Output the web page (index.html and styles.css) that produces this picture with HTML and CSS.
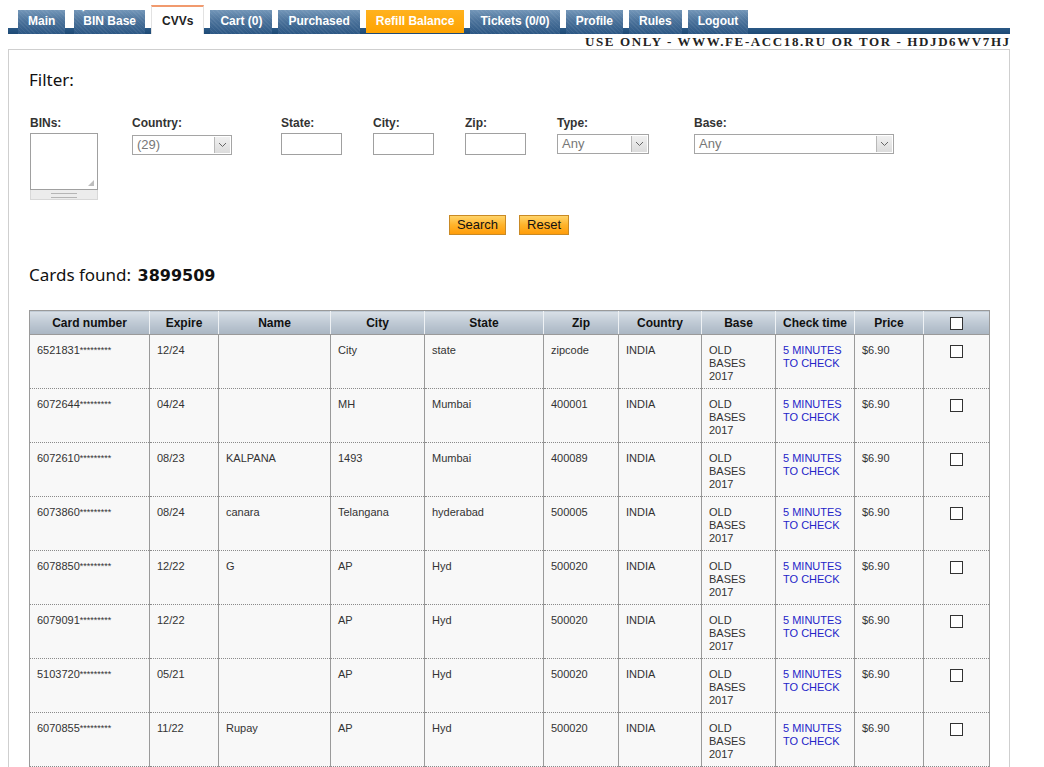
FILE: index.html
```html
<!DOCTYPE html>
<html>
<head>
<meta charset="utf-8">
<title>CVVs</title>
<link rel="stylesheet" href="styles.css">
</head>
<body>
<div class="page">
  <nav class="tabs">
    <a class="tab">Main</a>
    <a class="tab tab-bin"><span class="dot">˙</span>BIN Base</a>
    <a class="tab active">CVVs</a>
    <a class="tab">Cart (0)</a>
    <a class="tab">Purchased</a>
    <a class="tab refill">Refill Balance</a>
    <a class="tab">Tickets (0/0)</a>
    <a class="tab">Profile</a>
    <a class="tab">Rules</a>
    <a class="tab">Logout</a>
  </nav>
  <div class="note">USE ONLY - WWW.FE-ACC18.RU OR TOR - HDJD6WV7HJ</div>
  <main class="box">
    <h2 class="filter-title">Filter:</h2>
    <div class="fields">
      <div class="field f-bins">
        <label>BINs:</label>
        <div class="ta-wrap">
          <div class="ta"><span class="grip"></span></div>
          <div class="ta-bar"></div>
        </div>
      </div>
      <div class="field f-country">
        <label>Country:</label>
        <div class="sel sel-country"><span class="sel-val">(29)</span><span class="sel-btn"><svg width="9" height="6" viewBox="0 0 9 6"><polyline points="1,1 4.5,4.5 8,1" fill="none" stroke="#666" stroke-width="1"/></svg></span></div>
      </div>
      <div class="field f-text">
        <label>State:</label>
        <div class="inp"></div>
      </div>
      <div class="field f-text">
        <label>City:</label>
        <div class="inp"></div>
      </div>
      <div class="field f-text">
        <label>Zip:</label>
        <div class="inp"></div>
      </div>
      <div class="field f-type">
        <label>Type:</label>
        <div class="sel sel-type"><span class="sel-val">Any</span><span class="sel-btn"><svg width="9" height="6" viewBox="0 0 9 6"><polyline points="1,1 4.5,4.5 8,1" fill="none" stroke="#666" stroke-width="1"/></svg></span></div>
      </div>
      <div class="field f-base">
        <label>Base:</label>
        <div class="sel sel-base"><span class="sel-val">Any</span><span class="sel-btn"><svg width="9" height="6" viewBox="0 0 9 6"><polyline points="1,1 4.5,4.5 8,1" fill="none" stroke="#666" stroke-width="1"/></svg></span></div>
      </div>
    </div>
    <div class="buttons">
      <button class="btn">Search</button>
      <button class="btn">Reset</button>
    </div>
    <div class="found">Cards found: <b>3899509</b></div>
    <table class="cards">
      <colgroup>
        <col class="c-card"><col class="c-exp"><col class="c-name"><col class="c-city"><col class="c-state"><col class="c-zip"><col class="c-country"><col class="c-base"><col class="c-check"><col class="c-price"><col class="c-box">
      </colgroup>
      <thead>
        <tr><th>Card number</th><th>Expire</th><th>Name</th><th>City</th><th>State</th><th>Zip</th><th>Country</th><th>Base</th><th>Check time</th><th>Price</th><th><span class="cb"></span></th></tr>
      </thead>
      <tbody>
        <tr><td>6521831<span class="ast">*********</span></td><td>12/24</td><td></td><td>City</td><td>state</td><td>zipcode</td><td>INDIA</td><td>OLD<br>BASES<br>2017</td><td><a class="chk">5 MINUTES<br>TO CHECK</a></td><td>$6.90</td><td class="boxcell"><span class="cb"></span></td></tr>
        <tr><td>6072644<span class="ast">*********</span></td><td>04/24</td><td></td><td>MH</td><td>Mumbai</td><td>400001</td><td>INDIA</td><td>OLD<br>BASES<br>2017</td><td><a class="chk">5 MINUTES<br>TO CHECK</a></td><td>$6.90</td><td class="boxcell"><span class="cb"></span></td></tr>
        <tr><td>6072610<span class="ast">*********</span></td><td>08/23</td><td>KALPANA</td><td>1493</td><td>Mumbai</td><td>400089</td><td>INDIA</td><td>OLD<br>BASES<br>2017</td><td><a class="chk">5 MINUTES<br>TO CHECK</a></td><td>$6.90</td><td class="boxcell"><span class="cb"></span></td></tr>
        <tr><td>6073860<span class="ast">*********</span></td><td>08/24</td><td>canara</td><td>Telangana</td><td>hyderabad</td><td>500005</td><td>INDIA</td><td>OLD<br>BASES<br>2017</td><td><a class="chk">5 MINUTES<br>TO CHECK</a></td><td>$6.90</td><td class="boxcell"><span class="cb"></span></td></tr>
        <tr><td>6078850<span class="ast">*********</span></td><td>12/22</td><td>G</td><td>AP</td><td>Hyd</td><td>500020</td><td>INDIA</td><td>OLD<br>BASES<br>2017</td><td><a class="chk">5 MINUTES<br>TO CHECK</a></td><td>$6.90</td><td class="boxcell"><span class="cb"></span></td></tr>
        <tr><td>6079091<span class="ast">*********</span></td><td>12/22</td><td></td><td>AP</td><td>Hyd</td><td>500020</td><td>INDIA</td><td>OLD<br>BASES<br>2017</td><td><a class="chk">5 MINUTES<br>TO CHECK</a></td><td>$6.90</td><td class="boxcell"><span class="cb"></span></td></tr>
        <tr><td>5103720<span class="ast">*********</span></td><td>05/21</td><td></td><td>AP</td><td>Hyd</td><td>500020</td><td>INDIA</td><td>OLD<br>BASES<br>2017</td><td><a class="chk">5 MINUTES<br>TO CHECK</a></td><td>$6.90</td><td class="boxcell"><span class="cb"></span></td></tr>
        <tr><td>6070855<span class="ast">*********</span></td><td>11/22</td><td>Rupay</td><td>AP</td><td>Hyd</td><td>500020</td><td>INDIA</td><td>OLD<br>BASES<br>2017</td><td><a class="chk">5 MINUTES<br>TO CHECK</a></td><td>$6.90</td><td class="boxcell"><span class="cb"></span></td></tr>
      </tbody>
    </table>
  </main>
</div>
</body>
</html>
```
FILE: styles.css
```css
html, body {
  background: #fff;
}
body {
  margin: 5px 8px 0;
  font-family: "Liberation Sans", Arial, sans-serif;
  color: #333;
}
.page {
  width: 1002px;
}

/* tabs */
.tabs {
  display: flex;
  align-items: flex-end;
  gap: 6px;
  padding-left: 10px;
  height: 29px;
  background: linear-gradient(to top, #1e4a75 0, #2a5885 6px, transparent 6px);
}
.tab {
  display: block;
  height: 24px;
  box-sizing: border-box;
  padding: 3px 10px 5px;
  line-height: 16px;
  font-size: 12px;
  font-weight: bold;
  color: #fff;
  background:
    repeating-linear-gradient(45deg, rgba(255,255,255,0.06) 0 1px, transparent 1px 3px),
    linear-gradient(to bottom, #7396b8 0%, #4c739b 45%, #2c5784 100%);
  white-space: nowrap;
  position: relative;
}
.tab-bin {
  margin-left: 3px;
  padding-left: 9px;
  padding-right: 9px;
}
.tab .dot {
  position: absolute;
  left: 7px;
  top: -3px;
  font-size: 12px;
}
.tab.active {
  height: 29px;
  padding-top: 6px;
  background: #fff;
  color: #222;
  border-top: 2px solid #f19a6e;
  border-left: 1px solid #e2e2e2;
  border-right: 1px solid #e2e2e2;
  padding-left: 10px;
  padding-right: 10px;
}
.tab.refill {
  height: 23px;
  margin-bottom: 1px;
  background: linear-gradient(to bottom, #ffb21f, #ffa300);
  color: #fff;
}

.note {
  height: 15px;
  line-height: 15px;
  padding-left: 577px;
  overflow: hidden;
  white-space: nowrap;
  font-family: "Liberation Serif", "Times New Roman", serif;
  font-weight: bold;
  font-size: 13px;
  letter-spacing: 1.6px;
  color: #222;
}

/* content box */
.box {
  border: 1px solid #cfcfcf;
  border-bottom: none;
  padding: 20px 20px 0;
  min-height: 700px;
}
.filter-title {
  margin: 0;
  font-family: "Noto Sans", "DejaVu Sans", sans-serif;
  font-weight: normal;
  font-size: 17px;
  line-height: 20px;
  color: #111;
}

.fields {
  display: flex;
  align-items: flex-start;
  margin-top: 26px;
  padding-left: 1px;
}
.field label {
  display: block;
  font-size: 12px;
  font-weight: bold;
  line-height: 15px;
  margin-bottom: 2px;
  color: #333;
}
.f-bins { width: 102px; }
.f-country { width: 149px; }
.f-text { width: 92px; }
.f-type { width: 137px; }
.f-base { width: 210px; }

.ta-wrap {
  width: 68px;
}
.ta {
  height: 55px;
  border: 1px solid #a0a0a0;
  background: #fff;
  position: relative;
}
.grip {
  position: absolute;
  right: 3px;
  bottom: 3px;
  width: 6px;
  height: 6px;
  background:
    radial-gradient(circle, #999 0.6px, transparent 0.9px) 0 0 / 2px 2px;
  clip-path: polygon(100% 0, 100% 100%, 0 100%);
}
.ta-bar {
  height: 9px;
  background: #ececec;
  border: 1px solid #d8d8d8;
  border-top: none;
  position: relative;
}
.ta-bar::before {
  content: "";
  position: absolute;
  left: 20px;
  right: 20px;
  top: 3px;
  height: 3px;
  border-top: 1px solid #b5b5b5;
  border-bottom: 1px solid #b5b5b5;
}

.inp {
  margin-top: 2px;
  width: 61px;
  height: 22px;
  box-sizing: border-box;
  border: 1px solid #a0a0a0;
  background: #fff;
}
.sel {
  display: flex;
  margin-top: 3px;
  height: 20px;
  box-sizing: border-box;
  border: 1px solid #a5a5a5;
  background: #fff;
}
.sel-country { width: 100px; margin-top: 4px; }
.sel-type { width: 92px; }
.sel-base { width: 200px; }
.sel-val {
  flex: 1;
  padding-left: 4px;
  font-size: 13px;
  line-height: 18px;
  color: #777;
}
.sel-btn {
  width: 15px;
  display: flex;
  align-items: center;
  justify-content: center;
  background: linear-gradient(#f0f0f0, #dcdcdc);
  border-left: 1px solid #b8b8b8;
  margin: 1px;
}

.buttons {
  display: flex;
  justify-content: center;
  gap: 13px;
  margin-top: 15px;
}
.btn {
  height: 20px;
  padding: 0 7px;
  font-family: "Liberation Sans", Arial, sans-serif;
  font-size: 13px;
  line-height: 18px;
  color: #111;
  background: linear-gradient(to bottom, #ffd46a 0%, #ffb32a 50%, #ff9d0a 100%);
  border: 1px solid #c98a25;
  border-radius: 0;
}

.found {
  margin-top: 29px;
  font-family: "Noto Sans", "DejaVu Sans", sans-serif;
  font-size: 17px;
  line-height: 22px;
  color: #111;
}
.found b {
  font-family: "DejaVu Sans", sans-serif;
  font-size: 16px;
  margin-left: 2px;
}

/* table */
.cards {
  margin-top: 23px;
  width: 960px;
  border-collapse: collapse;
  table-layout: fixed;
  font-size: 11px;
}
.c-card { width: 120px; }
.c-exp { width: 69px; }
.c-name { width: 112px; }
.c-city { width: 94px; }
.c-state { width: 119px; }
.c-zip { width: 75px; }
.c-country { width: 83px; }
.c-base { width: 74px; }
.c-check { width: 79px; }
.c-price { width: 69px; }
.c-box { width: 66px; }

.cards th {
  height: 24px;
  box-sizing: border-box;
  padding: 0;
  font-size: 12px;
  font-weight: bold;
  color: #111;
  text-align: center;
  background: linear-gradient(to bottom, #d9e0e7 0%, #bcc7d2 55%, #aab6c3 100%);
  border-left: 1px solid #eef1f4;
  border-top: 1px solid #9a9a9a;
  border-bottom: 1px solid #9a9a9a;
  vertical-align: middle;
}
.cards th:first-child { border-left: 1px solid #9a9a9a; }
.cards th:last-child { border-right: 1px solid #9a9a9a; }
.cards td {
  height: 54px;
  box-sizing: border-box;
  padding: 9px 7px 0;
  vertical-align: top;
  line-height: 13px;
  color: #333;
  background: #f8f8f8;
  border-left: 1px solid #9a9a9a;
  border-right: 1px solid #9a9a9a;
  border-bottom: 1px dotted #8a8a8a;
}
.ast {
  font-size: 9px;
  vertical-align: 1px;
}
.chk {
  color: #2525c8;
}
.cards td.boxcell {
  text-align: center;
  padding-top: 9px;
}
.cb {
  display: inline-block;
  width: 11px;
  height: 11px;
  border: 1px solid #333;
  background: #fff;
  vertical-align: middle;
}
```
